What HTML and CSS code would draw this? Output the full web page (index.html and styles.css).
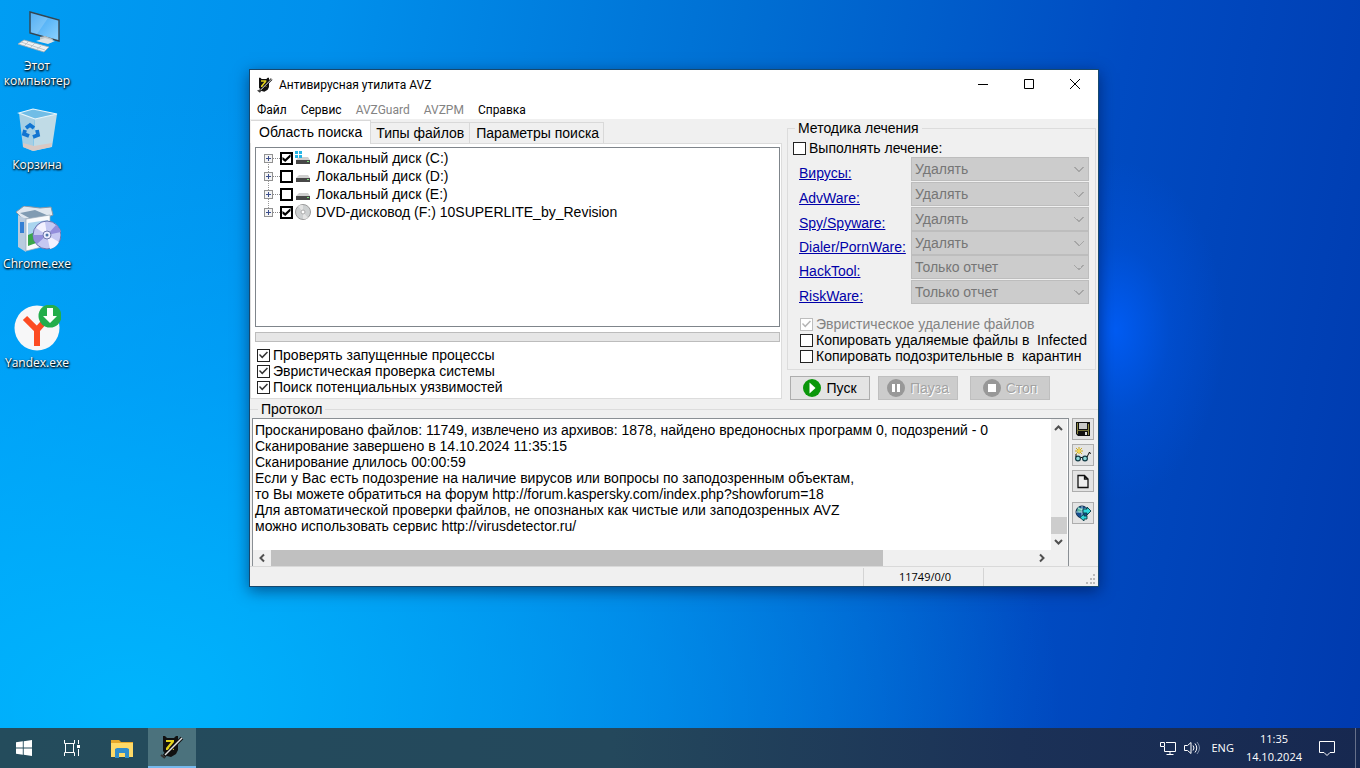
FILE: index.html
```html
<!DOCTYPE html>
<html lang="ru">
<head>
<meta charset="utf-8">
<title>Антивирусная утилита AVZ</title>
<link rel="stylesheet" href="styles.css">
</head>
<body>
<svg class="defs" aria-hidden="true">
  <symbol id="avz" viewBox="0 0 24 24">
    <path d="M3 1h2l2 2h7l2-2h2v14l-2 4-5 3-4-1-4-5z" fill="#111"/>
    <path d="M6 5h8v2l-5 6h5v2H6v-2l5-6H6z" fill="#e3d21c"/>
    <path d="M22 3 4 21" stroke="#111" stroke-width="3.600"/>
    <path d="M22 3 5 20" stroke="#e2e2e2" stroke-width="1.500"/>
    <path d="m1 20 4 3" stroke="#333" stroke-width="2"/>
  </symbol>
  <symbol id="drive" viewBox="0 0 16 16">
    <path d="M4 7h9l2 3H1z" fill="#cfcfcf"/><path d="M1 10h14v4H1z" fill="#474747"/><path d="M12 11h2v1h-2z" fill="#7be07b"/>
  </symbol>
</svg>
<main class="desktop">
  <nav class="shortcuts">
    <a class="shortcut" href="#pc">
      <svg viewBox="0 0 48 48"><defs><linearGradient id="scr" x2="1" y2="1"><stop stop-color="#2e9df0"/><stop offset="1" stop-color="#8fd3ff"/></linearGradient></defs>
        <path d="M17 4 46 12v21L17 25z" fill="url(#scr)" stroke="#36454f" stroke-width="1.400"/><path d="m18 5 17 5-11 16-6-2z" fill="#fff" opacity=".18"/>
        <path d="m27 29 5-1 8 3-2 4-11-3z" fill="#bcc5ca"/><path d="m23 33 9-3 10 3-7 3z" fill="#dde3e6"/>
        <path d="m5 36 6-4 25 7-5 5z" fill="#eef1f3" stroke="#9fa9b0" stroke-width=".8"/><path d="m8 34 24 8M11 38l5-5M17 40l5-5M23 42l5-4" stroke="#b5bdc3" stroke-width=".8"/></svg>
      <span>Этот<br>компьютер</span></a>
    <a class="shortcut" href="#bin">
      <svg viewBox="0 0 48 48"><path d="m6 6 16 5-2 33-10-4z" fill="#a6cfe4"/><path d="m22 11 22-4-5 33-19 4z" fill="#c0dbe6"/><path d="m6 6 14-4 24 5-22 5z" fill="#71bde6" stroke="#e9f6fb" stroke-width="1.200"/><path d="m10 36 11 3 18-3-1 4-18 4-10-4z" fill="#d8c9c4"/>
        <g fill="none" stroke="#1275d1" stroke-width="3.800"><path d="m13 21 4-3 4 3M24 23l1 5-5 2M16 29l-5-2 1-4" /></g></svg>
      <span>Корзина</span></a>
    <a class="shortcut" href="#chrome">
      <svg viewBox="0 0 48 48"><path d="m3 6 8-6 16 2 11-1 2 8-10 4H10z" fill="#dfe7ef" stroke="#8796a5"/><path d="m7 7 15-3 14 6-18 3z" fill="#809bb2"/><path d="m5 9 8 4v33l-8-5z" fill="#b9cbde"/><path d="m13 13 24-4v30l-24 6z" fill="#f8fafc" stroke="#9aabba" stroke-width=".7"/><path d="m15 17 20-3v10l-20 6z" fill="#aad5ef"/><path d="m15 29 19-8v12l-19 7z" fill="#3aa64a"/><path d="m21 25 10-3v8l-10 3z" fill="#ee6b35"/><path d="M7 16h4v11H7z" fill="#3480d4"/>
        <circle cx="34" cy="29" r="14" fill="#c5c8f2" stroke="#6873ae"/><path d="M34 29 23 22a14 14 0 0 1 9-6zm0 0 12 7a14 14 0 0 1-9 7z" fill="#f3f2ff"/><path d="m34 29 9-10a14 14 0 0 1 5 7zm0 0-10 9a14 14 0 0 1-4-9z" fill="#938edb"/><circle cx="34" cy="29" r="4" fill="#eef" stroke="#7179ac"/><circle cx="34" cy="29" r="1.500" fill="#4c73a8"/></svg>
      <span>Chrome.exe</span></a>
    <a class="shortcut" href="#yandex">
      <svg viewBox="0 0 48 48"><circle cx="24" cy="23" r="22.500" fill="#f7f7f8"/><path d="m12 13 12 12v16M23 26l8-9" fill="none" stroke="#fc4b22" stroke-width="6"/><circle cx="37" cy="11" r="11.500" fill="#24ad4b"/><path d="M34 3h6v8h4l-7 7-7-7h4z" fill="#fff"/></svg>
      <span>Yandex.exe</span></a>
  </nav>

  <section class="window" aria-label="Антивирусная утилита AVZ">
    <header class="titlebar">
      <svg class="app-icon"><use href="#avz"/></svg>
      <h1>Антивирусная утилита AVZ</h1>
      <div class="caption">
        <button aria-label="Свернуть"><svg viewBox="0 0 12 12"><path d="M1 5.500h10"/></svg></button>
        <button aria-label="Развернуть"><svg viewBox="0 0 12 12"><path d="M1.500 .500h9v9h-9z"/></svg></button>
        <button aria-label="Закрыть"><svg viewBox="0 0 12 12"><path d="m1 0 10 10M11 0 1 10"/></svg></button>
      </div>
    </header>
    <nav class="menubar">
      <button>Файл</button><button>Сервис</button><button disabled>AVZGuard</button><button disabled>AVZPM</button><button>Справка</button>
    </nav>
    <div class="client">
      <div class="left">
        <div class="tabs" role="tablist">
          <button class="tab active" role="tab" aria-selected="true">Область поиска</button><button class="tab" role="tab">Типы файлов</button><button class="tab" role="tab">Параметры поиска</button>
        </div>
        <div class="page">
          <ul class="tree">
            <li><button class="expand" aria-label="Развернуть C"></button><i class="dots"></i><label><input type="checkbox" class="bold-check" checked><svg class="disk"><use href="#drive"/><path d="M0 1h3v3H0zm4 0h3v3H4zM0 5h3v3H0zm4 0h3v3H4z" fill="#27b6e6"/></svg><span>Локальный диск (C:)</span></label></li>
            <li><button class="expand" aria-label="Развернуть D"></button><i class="dots"></i><label><input type="checkbox" class="bold-check"><svg class="disk"><use href="#drive"/></svg><span>Локальный диск (D:)</span></label></li>
            <li><button class="expand" aria-label="Развернуть E"></button><i class="dots"></i><label><input type="checkbox" class="bold-check"><svg class="disk"><use href="#drive"/></svg><span>Локальный диск (E:)</span></label></li>
            <li><button class="expand" aria-label="Развернуть F"></button><i class="dots"></i><label><input type="checkbox" class="bold-check" checked><svg class="disk" viewBox="0 0 16 16"><circle cx="8" cy="8" r="7.500" fill="#cdd0d1" stroke="#9b9b9b"/><path d="M8 8 3 2a8 8 0 0 1 5-1zm0 0 5 6a8 8 0 0 1-5 1z" fill="#e4e4e4"/><circle cx="8" cy="8" r="2" fill="#fff" stroke="#aaa"/></svg><span>DVD-дисковод (F:) 10SUPERLITE_by_Revision</span></label></li>
          </ul>
          <div class="progress" role="progressbar" aria-label="Ход проверки" aria-valuenow="0"></div>
          <div class="checks">
            <label class="check"><input type="checkbox" checked>Проверять запущенные процессы</label>
            <label class="check"><input type="checkbox" checked>Эвристическая проверка системы</label>
            <label class="check"><input type="checkbox" checked>Поиск потенциальных уязвимостей</label>
          </div>
        </div>
      </div>
      <div class="right">
        <fieldset class="method">
          <legend>Методика лечения</legend>
          <label class="check"><input type="checkbox">Выполнять лечение:</label>
          <div class="actions">
            <a href="#virus" id="l1">Вирусы:</a><select disabled aria-labelledby="l1"><option>Удалять</option></select>
            <a href="#adv" id="l2">AdvWare:</a><select disabled aria-labelledby="l2"><option>Удалять</option></select>
            <a href="#spy" id="l3">Spy/Spyware:</a><select disabled aria-labelledby="l3"><option>Удалять</option></select>
            <a href="#dialer" id="l4">Dialer/PornWare:</a><select disabled aria-labelledby="l4"><option>Удалять</option></select>
            <a href="#hack" id="l5">HackTool:</a><select disabled aria-labelledby="l5"><option>Только отчет</option></select>
            <a href="#risk" id="l6">RiskWare:</a><select disabled aria-labelledby="l6"><option>Только отчет</option></select>
          </div>
          <div class="checks nested">
            <label class="check off"><input type="checkbox" checked disabled>Эвристическое удаление файлов</label>
            <label class="check"><input type="checkbox">Копировать удаляемые файлы в&nbsp; Infected</label>
            <label class="check"><input type="checkbox">Копировать подозрительные в&nbsp; карантин</label>
          </div>
        </fieldset>
        <div class="run">
          <button class="push"><svg viewBox="0 0 18 18"><circle cx="9" cy="9" r="9" fill="#0b970b"/><path d="m6.500 3.500 6 5.500-6 5.500z" fill="#fff"/></svg>Пуск</button>
          <button class="push" disabled><svg viewBox="0 0 18 18"><circle cx="9" cy="9" r="9" fill="#989898"/><path d="M5 5h3v8H5zm5 0h3v8h-3z" fill="#fff"/></svg>Пауза</button>
          <button class="push" disabled><svg viewBox="0 0 18 18"><circle cx="9" cy="9" r="9" fill="#989898"/><path d="M5 5h8v8H5z" fill="#fff"/></svg>Стоп</button>
        </div>
      </div>
    </div>
    <fieldset class="protocol">
      <legend>Протокол</legend>
      <div class="protocol-row">
        <div class="log">
          <div class="log-text">
            <p>Просканировано файлов: 11749, извлечено из архивов: 1878, найдено вредоносных программ 0, подозрений - 0</p>
            <p>Сканирование завершено в 14.10.2024 11:35:15</p>
            <p>Сканирование длилось 00:00:59</p>
            <p>Если у Вас есть подозрение на наличие вирусов или вопросы по заподозренным объектам,</p>
            <p>то Вы можете обратиться на форум http://forum.kaspersky.com/index.php?showforum=18</p>
            <p>Для автоматической проверки файлов, не опознаных как чистые или заподозренных AVZ</p>
            <p>можно использовать сервис http://virusdetector.ru/</p>
          </div>
          <div class="vbar"><svg viewBox="0 0 16 16"><path d="m4 11 3.500-3.500L11 11"/></svg><i></i><svg viewBox="0 0 16 16"><path d="m4 6 3.500 3.500L11 6"/></svg></div>
          <div class="hbar"><svg viewBox="0 0 16 16"><path d="M9 4.500 5.500 8 9 11.500"/></svg><i></i><svg viewBox="0 0 16 16"><path d="M6 4.500 9.500 8 6 11.500"/></svg></div>
        </div>
        <div class="tools">
          <button aria-label="Сохранить протокол"><svg viewBox="0 0 16 16"><path d="M1 1h14v14H3l-2-2z" fill="#111"/><path d="M2 2h1v11H2zm11 1h1v11h-1z" fill="#8b8740"/><path d="M4 2h8v6H4z" fill="#c8c8c8"/><path d="M2 9h12v1H2z" fill="#77743a"/><path d="M10 11h2v3h-2z" fill="#ddd"/></svg></button>
          <button aria-label="Просмотр"><svg viewBox="0 0 16 16"><path d="m1 1 6 6m0-6L1 7m3-7v7M0 4h8" stroke="#c9a91d"/><circle cx="4" cy="4" r="1.800" fill="#f7d84a"/><g fill="#8ed9d9" stroke="#123c46" stroke-width="1.200"><circle cx="3" cy="11.500" r="2.400"/><circle cx="10" cy="11.500" r="2.400"/></g><path d="M5.500 10.500h2M12 10l2.500-5 1 2M1 10V7" fill="none" stroke="#111"/></svg></button>
          <button aria-label="Очистить"><svg viewBox="0 0 16 16"><path d="M3 2.500h6.500L13 6v8.500H3zM9.500 2.500V6H13" fill="#eee" stroke="#111" stroke-width="1.300"/></svg></button>
          <button class="apart" aria-label="Обновить базы"><svg viewBox="0 0 16 16"><circle cx="7" cy="7" r="6" fill="#174f91" stroke="#0b2949"/><path d="M3 2 8 4 5 8 2 6z" fill="#59b39a"/><path d="M1 7h12M7 1v12M3 3c3 2 5 2 8 0" fill="none" stroke="#c3edf1" stroke-width=".8"/><path d="M8 4h4V2l4 4-4 4V8H8zM12 11H9V9l-4 3.500L9 16v-2h3z" fill="#30d5d9" stroke="#073a44" stroke-width=".9"/></svg></button>
        </div>
      </div>
    </fieldset>
    <footer class="status"><span></span><span class="count">11749/0/0</span><span class="grip"><svg viewBox="0 0 10 10"><path d="M7 0h2v2H7zM4 4h2v2H4zm3 0h2v2H7zM0 8h2v2H0zm4 0h2v2H4zm3 0h2v2H7z"/></svg></span></footer>
  </section>
</main>
<footer class="taskbar">
  <button class="task" aria-label="Пуск"><svg class="i16" viewBox="0 0 16 16"><path d="m0 2.300 6.800-1v6.200H0zm7.700-1.100L16 0v7.500H7.700zM0 8.400h6.800v6.300L0 13.700zm7.700 0H16V16l-8.300-1.200z" fill="#fff"/></svg></button>
  <button class="task" aria-label="Представление задач"><svg class="i16" viewBox="0 0 16 16"><path d="M.5 0v3.500h10V0M.5 16v-3.500h10V16M1.500 3.500v9M9.500 3.500v9M14.500 0v4m0 5v7" fill="none" stroke="#fff"/><path d="M13 5h3v3h-3z" fill="#fff"/></svg></button>
  <button class="task" aria-label="Проводник"><svg class="i22" viewBox="0 0 22 22"><path d="M0 3h8l2 2h12v15H0z" fill="#e7a92b"/><path d="M0 6h22v14H0z" fill="#ffda67"/><path d="M4 21v-9l2-1h10l2 1v9h-4v-5H8v5z" fill="#318dcc"/></svg></button>
  <button class="task current" aria-label="AVZ"><svg class="i24"><use href="#avz"/></svg></button>
  <div class="tray">
    <svg class="i16" viewBox="0 0 16 16"><path d="M6 2.500h9.500v9H4.500V7M.5 2.500h4v4h-4zM10 11.500v3M6.500 14.500h7" fill="none" stroke="#fff"/></svg>
    <svg class="i16" viewBox="0 0 16 16"><path d="M.5 5.500h3l3.500-3v11l-3.500-3h-3zM9 5.500q2 2.500 0 5M11 3.500q3.500 4.500 0 9" fill="none" stroke="#fff"/><path d="M13 2q5 6 0 12" fill="none" stroke="#8190aa"/></svg>
    <span class="lang">ENG</span>
    <time class="clock">11:35<br>14.10.2024</time>
    <button class="notes" aria-label="Уведомления"><svg class="i16" viewBox="0 0 16 16"><path d="M.5 1.500h15v11H11l-3 3-3-3H.5z" fill="none" stroke="#fff"/></svg></button>
  </div>
</footer>
</body>
</html>
```
FILE: styles.css
```css
* { box-sizing: border-box; }
body {
  margin: 0;
  min-height: 100vh;
  display: flex;
  flex-direction: column;
  font: 14px/16px "Liberation Sans", Arial, sans-serif;
  color: #000;
  background:
    radial-gradient(ellipse 110px 170px at 82% 43%, rgba(0, 96, 255, .8), rgba(0, 90, 240, .3) 50%, transparent),
    radial-gradient(ellipse 68% 80% at 10% 92%, rgba(0, 186, 255, .85), rgba(0, 170, 255, .5) 55%, transparent),
    linear-gradient(100deg, #009df3 0%, #0090ec 22%, #006fd3 50%, #004bc2 76%, #003aae 100%);
}
button { font: inherit; color: inherit; border: 0; padding: 0; background: none; }
fieldset { margin: 0; min-width: 0; }
p, ul, h1 { margin: 0; padding: 0; }
svg { display: block; flex: none; }
.defs { position: absolute; width: 0; height: 0; }

.desktop { position: relative; flex: 1; padding: 8px 0; }
.shortcuts { display: grid; grid-auto-rows: 99px; width: 74px; }
.shortcut {
  display: flex; flex-direction: column; align-items: center; gap: 2px;
  font: 12px/15px "Open Sans", "Noto Sans", sans-serif;
  color: #fff; text-align: center; text-decoration: none;
  text-shadow: 1px 1px 2px #000, 0 1px 2px #000;
}
.shortcut svg { width: 48px; height: 48px; }

.window {
  position: absolute; left: 249px; top: 69px; width: 850px;
  border: 1px solid #16486e;
  background: #f0f0f0;
  box-shadow: 0 4px 14px rgba(0, 10, 50, .5);
}
.titlebar {
  display: flex; align-items: center; height: 30px; padding-left: 7px; gap: 6px;
  background: #fff;
}
.titlebar h1 { flex: 1; font: 12px/16px Roboto, "Open Sans", sans-serif; }
.app-icon { width: 16px; height: 16px; }
.caption { display: flex; align-self: stretch; }
.caption button { width: 46px; display: grid; place-items: center; }
.caption svg { width: 12px; height: 12px; fill: none; stroke: #000; }
.menubar {
  display: flex; height: 19px; padding-left: 7px; gap: 14px;
  font: 12px/20px Roboto, "Open Sans", sans-serif;
  background: #fff;
}
.menubar button:disabled { color: #838383; }

.client { display: grid; grid-template-columns: 532px 1fr; column-gap: 5px; padding: 1px 2px 0 0; }
.tabs { display: flex; align-items: flex-end; height: 23px; padding-left: 1px; }
.tab {
  height: 21px; padding: 0 5px; border: 1px solid #d9d9d9; border-bottom: 0; border-left: 0;
  background: #f0f0f0; white-space: nowrap;
}
.tab:last-child { padding: 0 4px 0 6px; }
.tab.active { height: 24px; margin-bottom: -1px; padding: 0 8px 2px 8px; background: #fff; }
.page { padding: 3px 1px 3px 4px; border: 1px solid #dcdcdc; background: #fff; }
.tree {
  height: 180px; padding: 1px 8px;
  border: 1px solid #7f858b; background: #fff; list-style: none;
}
.tree li {
  display: flex; align-items: center; height: 18px;
  background: repeating-linear-gradient(#999 0 1px, transparent 1px 2px) 4px 0 / 1px 100% no-repeat;
}
.tree li:first-child { background-position: 4px 9px; }
.tree li:last-child { background-size: 1px 9px; }
.tree label { display: flex; align-items: center; }
.tree span { padding-left: 5px; }
.expand {
  width: 9px; height: 9px; border: 1px solid #919191;
  background:
    linear-gradient(#3d4f8c, #3d4f8c) center / 5px 1px no-repeat,
    linear-gradient(#3d4f8c, #3d4f8c) center / 1px 5px no-repeat, #f4f4f4;
}
.dots { width: 7px; border-top: 1px dotted #888; }
.disk { width: 16px; height: 16px; margin-left: 2px; }

input[type="checkbox"] {
  appearance: none; flex: none; display: grid; place-items: center;
  width: 13px; height: 13px; margin: 0;
  border: 1px solid #222; background: #fff;
}
input[type="checkbox"]:checked::after {
  content: ""; width: 9px; height: 9px; background: #333;
  clip-path: polygon(0 50%, 11% 38%, 36% 64%, 88% 10%, 100% 22%, 36% 88%);
}
input[type="checkbox"]:disabled { border-color: #bdbdbd; }
input[type="checkbox"]:disabled::after { background: #b5b5b5; }
input.bold-check { border: 2px solid #000; }
input.bold-check:checked::after {
  background: #000;
  clip-path: polygon(5% 40%, 36% 60%, 95% 5%, 95% 38%, 36% 95%, 5% 70%);
}

.progress { height: 10px; margin: 5px 0; border: 1px solid #bcbcbc; background: #e6e6e6; }
.checks { padding-left: 2px; }
.check { display: flex; align-items: center; gap: 3px; height: 16px; white-space: nowrap; }
.check.off { color: #838383; }

.method { padding: 4px 4px 5px 5px; border: 1px solid #dcdcdc; }
.method legend { padding: 0 3px; margin-left: 2px; }
.actions {
  display: grid; grid-template-columns: 112px 1fr;
  grid-template-rows: 25px 25px 24px 24px 25px 24px;
  padding: 1px 2px 0 6px;
}
.actions a { padding-top: 8px; color: #0000a8; white-space: nowrap; }
select {
  appearance: none; height: 24px; min-width: 0; padding: 0 3px; border: 1px solid #bdbdbd; border-radius: 0;
  font: inherit; color: #767676; opacity: 1;
  background:
    linear-gradient(45deg, transparent 45%, #a6a6a6 45% 60%, transparent 60%) right 9px center / 5px 5px no-repeat,
    linear-gradient(-45deg, transparent 45%, #a6a6a6 45% 60%, transparent 60%) right 4px center / 5px 5px no-repeat,
    #ccc;
}
.nested { padding: 12px 0 0 7px; }

.run { display: flex; gap: 8px; padding: 6px 0 0 3px; }
.push {
  display: flex; align-items: center; justify-content: center; gap: 5px;
  width: 80px; height: 24px; border: 1px solid #adadad; background: #e4e4e4;
}
.push:last-child { margin-left: 4px; }
.push svg { width: 18px; height: 18px; }
.push:disabled { border-color: #bfbfbf; color: #a2a2a2; background: #ccc; text-shadow: 1px 1px 0 #fff; }

.protocol { margin-top: 1px; padding: 1px 0 0 2px; border: 0; border-top: 1px solid #dcdcdc; }
.protocol legend { padding: 0 3px; margin-left: 6px; }
.protocol-row { display: flex; gap: 3px; }
.log {
  flex: 1; display: grid; grid-template: 131px 16px / 1fr 17px;
  border: 1px solid #8a8f94; border-bottom: 0; background: #fff;
}
.log-text { padding: 3px 2px; overflow: hidden; white-space: nowrap; }
.vbar { display: flex; flex-direction: column; width: 16px; background: #f0f0f0; }
.vbar i { height: 17px; margin-top: auto; background: #cdcdcd; }
.vbar svg, .hbar svg { width: 16px; height: 16px; fill: none; stroke: #505050; stroke-width: 2; }
.hbar { grid-column: span 2; display: flex; padding: 0 18px 0 2px; background: #f0f0f0; }
.hbar i { width: 77%; margin-right: auto; background: #c0c0c0; }
.tools { display: flex; flex-direction: column; gap: 4px; padding-right: 4px; }
.tools button {
  display: grid; place-items: center; width: 22px; height: 22px;
  border: 1px solid #adadad; background: #e3e3e3;
}
.tools svg { width: 16px; height: 16px; }
.tools .apart { margin-top: 6px; }
.status {
  display: grid; grid-template-columns: 1fr 120px 115px; height: 20px; padding-top: 1px;
  border-top: 1px solid #d9d9d9;
  font: 11px/18px "Open Sans", "Noto Sans", sans-serif;
}
.status span + span { border-left: 1px solid #d4d4d4; }
.count { padding-left: 35px; }
.grip { display: flex; align-items: flex-end; justify-content: flex-end; padding: 2px; }
.grip svg { width: 10px; height: 10px; fill: #bababa; }

.taskbar {
  display: flex; height: 40px; color: #fff;
  background: linear-gradient(90deg, #244c5c, #24485c 45%, #1b3157 75%, #172850);
}
.task { display: grid; place-items: center; width: 48px; }
.task:nth-child(3) { width: 52px; }
.task.current { background: #4b727d; border-bottom: 2px solid #76b9ed; }
.i16 { width: 16px; height: 16px; }
.i22 { width: 22px; height: 22px; }
.i24 { width: 24px; height: 24px; }
.tray {
  display: flex; align-items: center; gap: 8px; margin-left: auto; margin-right: 4px; padding-right: 20px;
  border-right: 1px solid #66708a;
  font: 11px/18px "Open Sans", "Noto Sans", sans-serif;
}
.lang { margin-left: 3px; }
.clock { margin: 0 6px 0 4px; text-align: center; }
.notes { padding: 0 0 0 3px; }
```
